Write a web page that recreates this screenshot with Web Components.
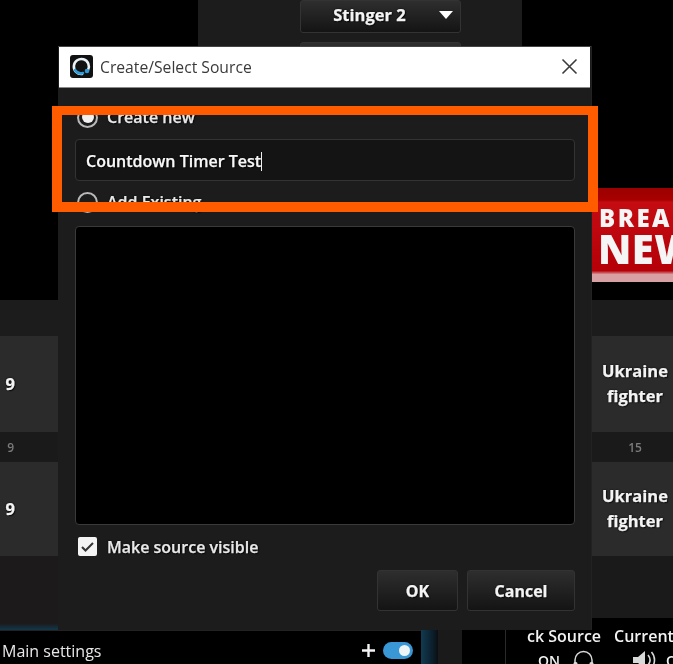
<!DOCTYPE html>
<html>
<head>
<meta charset="utf-8">
<title>Create/Select Source</title>
<style>
  html, body { margin: 0; padding: 0; background: #000; }
  body { width: 673px; height: 664px; overflow: hidden; font-family: "Open Sans", "Liberation Sans", sans-serif; color: #f2f2f2; }
</style>
</head>
<body>

<studio-desktop>
  <source-dialog heading="Create/Select Source"></source-dialog>
</studio-desktop>

<script>
const textGlow = 'text-shadow: 0 0 2px #000, 1px 1px 1px rgba(0,0,0,.7); -webkit-text-stroke: .25px currentColor;';

class StudioButton extends HTMLElement {
    connectedCallback() {
        this.attachShadow({ mode: 'open' }).innerHTML = `
        <style>
            :host {
                display: flex;
                align-items: center;
                justify-content: center;
                box-sizing: border-box;
                border: 1px solid #333;
                border-radius: 3px;
                background: linear-gradient(#2e2e2e, #141414);
                font-size: 16px;
                font-weight: 700;
                color: #f4f4f4;
                ${textGlow}
            }
        </style>
        <slot></slot>`;
    }
}

class SceneTile extends HTMLElement {
    connectedCallback() {
        this.attachShadow({ mode: 'open' }).innerHTML = `
        <style>
            :host {
                display: flex;
                align-items: center;
                box-sizing: border-box;
                padding-bottom: 2px;
                background: #2c2b2b;
                font-size: 16.5px;
                font-weight: 700;
                line-height: 25px;
                color: #f4f4f4;
                text-align: center;
                ${textGlow}
            }
            :host([align=end]) { justify-content: flex-end; padding-right: 43px; }
            :host([align=center]) { justify-content: center; padding-left: 7px; }
        </style>
        <slot></slot>`;
    }
}

class SceneNumber extends HTMLElement {
    connectedCallback() {
        this.attachShadow({ mode: 'open' }).innerHTML = `
        <style>
            :host {
                display: flex;
                align-items: center;
                box-sizing: border-box;
                background: #1a1a1a;
                font-size: 12px;
                font-weight: 600;
                color: #7b7b7b;
            }
            :host([align=end]) { justify-content: flex-end; padding-right: 44px; }
            :host([align=center]) { justify-content: center; padding-left: 7px; }
        </style>
        <slot></slot>`;
    }
}

class StudioDesktop extends HTMLElement {
    connectedCallback() {
        this.attachShadow({ mode: 'open' }).innerHTML = `
        <style>
            :host {
                display: block;
                position: relative;
                width: 673px;
                height: 664px;
                overflow: hidden;
                background: #000;
                filter: blur(.45px);
            }
            .top { display: grid; grid-template-columns: 198px 324px 1fr; height: 300px; }
            .panel { background: #1c1c1c; height: 46px; padding-left: 102px; display: flex; flex-direction: column; gap: 9px; overflow: hidden; }
            .stinger { width: 161px; height: 33px; flex: none; padding: 0 8px 4px 0; font-size: 16.5px; }
            .second { width: 161px; height: 33px; flex: none; }
            .caret { width: 0; height: 0; border: 7px solid transparent; border-top: 8px solid #fff; border-bottom: 0; margin-left: 33px; margin-right: -33px; }
            .news-slot { display: flex; justify-content: flex-end; padding-top: 188px; }
            .news { width: 82px; height: 94px; box-sizing: border-box; overflow: hidden; white-space: nowrap; background: linear-gradient(#9c0000 0, #a80000 12px, #c40c12 14px, #b50008 88%, #d9a0a4 92%, #d9a0a4 100%); color: #f5f5f5; font-weight: 800; padding: 16px 0 0 8px; }
            .news b { display: block; font-weight: 800; }
            .news .a { font-size: 24px; line-height: 27px; letter-spacing: 2.5px; }
            .news .b { font-size: 40px; line-height: 35px; letter-spacing: .5px; margin-left: -1px; }
            .lower { display: grid; grid-template-columns: 505px 168px; height: 364px; }
            .col { display: flex; flex-direction: column; }
            .board { display: grid; grid-template-rows: 36px 96px 30px 94px; }
            .board.left { width: 58px; height: 330px; background: linear-gradient(#1c1a1a 0, #1c1a1a 98%, #12394d 100%); }
            .board.right { height: 318px; padding-left: 85px; background: #1b1a1a; }
            .board .head { background: #1d1c1c; }
            .bar { display: flex; flex: 1; }
            .settings { width: 421px; box-sizing: border-box; display: flex; align-items: center; padding: 0 8px 2px 2px; border-top: 1px solid #222; font-size: 16px; color: #e8e8e8; }
            .settings span { flex: 1; }
            .plus { display: block; margin-right: 7px; }
            .toggle { width: 30px; height: 17px; border-radius: 9px; background: #3a97d6; position: relative; }
            .toggle::after { content: ""; position: absolute; right: 3px; top: 3px; width: 11px; height: 11px; border-radius: 50%; background: #eef3f6; }
            .edge { width: 17px; background: linear-gradient(90deg, #123a50, #0c2230 60%, #0a0f13); }
            .gutter { width: 24px; background: #1a1a1a; }
            .audio { flex: 1; padding: 6px 0 0 21px; border-left: 1px solid #2a2a2a; font-size: 16px; font-weight: 600; white-space: nowrap; overflow: hidden; }
            .audio-head { display: flex; gap: 13px; height: 24px; align-items: center; }
            .audio-row { display: flex; align-items: center; margin-left: 11px; height: 24px; font-size: 14px; }
            .audio-row svg { display: block; flex: none; }
        </style>
        <div class="top">
            <div></div>
            <div class="panel">
                <studio-button class="stinger">Stinger 2<span class="caret"></span></studio-button>
                <studio-button class="second"></studio-button>
            </div>
            <div class="news-slot">
                <div class="news"><b class="a">BREAKING</b><b class="b">NEWS</b></div>
            </div>
        </div>
        <div class="lower">
            <div class="col">
                <div class="board left">
                    <div class="head"></div>
                    <scene-tile align="end">9</scene-tile>
                    <scene-number align="end">9</scene-number>
                    <scene-tile align="end">9</scene-tile>
                </div>
                <div class="bar">
                    <div class="settings">
                        <span>Main settings</span>
                        <svg class="plus" width="15" height="15" viewBox="0 0 15 15"><path d="M7.500 1v13M1 7.500h13" stroke="#f4f4f4" stroke-width="2.400"/></svg>
                        <div class="toggle"></div>
                    </div>
                    <div class="edge"></div>
                    <div class="gutter"></div>
                    <div style="flex:1"></div>
                </div>
            </div>
            <div class="col">
                <div class="board right">
                    <div class="head"></div>
                    <scene-tile align="center">Ukraine<br>fighter</scene-tile>
                    <scene-number align="center">15</scene-number>
                    <scene-tile align="center">Ukraine<br>fighter</scene-tile>
                </div>
                <div class="audio">
                    <div class="audio-head"><span>ck Source</span><span>Current</span></div>
                    <div class="audio-row">
                        <span>ON</span>
                        <svg style="margin-left:12px" width="23" height="22" viewBox="0 0 23 22"><path d="M3 15v-4a8.500 8.500 0 0 1 17 0v4" fill="none" stroke="#d8d8d8" stroke-width="1.500"/><rect x="1.500" y="13" width="4" height="7" rx="1.500" fill="#d8d8d8"/><rect x="17.500" y="13" width="4" height="7" rx="1.500" fill="#d8d8d8"/></svg>
                        <svg style="margin-left:37px" width="24" height="22" viewBox="0 0 24 22"><path d="M1 8h5l7-6v18l-7-6H1z" fill="#d8d8d8"/><path d="M16 6c2.500 3 2.500 7 0 10M19.500 3c4 4.500 4 11.500 0 16" fill="none" stroke="#d8d8d8" stroke-width="1.600"/></svg>
                        <span style="margin-left:10px">ON</span>
                    </div>
                </div>
            </div>
        </div>
        <slot></slot>`;
    }
}

class SourceDialog extends HTMLElement {
    connectedCallback() {
        this.attachShadow({ mode: 'open' }).innerHTML = `
        <style>
            :host {
                position: absolute;
                left: 58px;
                top: 46px;
                width: 533px;
                height: 584px;
                box-sizing: border-box;
                display: flex;
                flex-direction: column;
                background: #1c1c1c;
                border-top: 1px solid #444;
                box-shadow: 1px 0 0 #222;
                font-size: 16px;
                font-weight: 600;
                color: #e9e9e9;
            }
            .title { height: 41px; flex: none; box-sizing: border-box; background: #fff; border-bottom: 1px solid #8a8a8a; margin: 0 1px; display: flex; align-items: center; padding: 0 12px 1px 11px; color: #3a3a3a; font-weight: 400; font-size: 15.7px; }
            .title span { flex: 1; margin-left: 7px; }
            .logo { display: block; }
            .close { display: block; }
            .body { flex: 1; display: flex; flex-direction: column; padding: 18px 16px 0 17px; }
            .option { display: flex; align-items: center; gap: 9px; height: 22px; ${textGlow} }
            .radio { width: 21px; height: 21px; box-sizing: border-box; border-radius: 50%; border: 2px solid #b9b9b9; display: flex; align-items: center; justify-content: center; margin-left: 2px; }
            .radio.on::after { content: ""; width: 12px; height: 12px; border-radius: 50%; background: #f2f2f2; }
            .field { height: 42px; box-sizing: border-box; margin: 11px 0 10px; padding: 2px 10px 0; border: 1px solid #333; border-radius: 4px; background: #141414; display: flex; align-items: center; color: #f8f8f8; ${textGlow} }
            .cursor { display: inline-block; width: 1px; height: 19px; background: #f0f0f0; }
            .list { height: 299px; flex: none; box-sizing: border-box; margin-top: 13px; background: #000; border: 1px solid #3a3a3a; border-radius: 4px; }
            .visible { display: flex; align-items: center; gap: 10px; height: 20px; margin: 11px 0 14px 3px; ${textGlow} }
            .visible span { padding-top: 2px; }
            .check { width: 19px; height: 19px; display: block; }
            .actions { display: flex; justify-content: flex-end; gap: 9px; }
            .actions studio-button { height: 41px; }
            .ok { width: 81px; }
            .cancel { width: 108px; }
            .marker { position: absolute; left: -6px; top: 59px; width: 546px; height: 106px; box-sizing: border-box; border: solid #ff5c00; border-width: 9px 10px 10px; }
        </style>
        <div class="title">
            <svg class="logo" width="23" height="23" viewBox="0 0 23 23">
                <rect width="23" height="23" rx="3" fill="#111"/>
                <path d="M12 19a7.500 7.500 0 1 1 6-4" fill="none" stroke="#e8f2f8" stroke-width="2.600" stroke-linecap="round"/>
                <path d="M5 15c2 3 5 4 8 3" fill="none" stroke="#2d9bd8" stroke-width="2.600" stroke-linecap="round"/>
                <circle cx="17" cy="16" r="2.300" fill="#2d9bd8"/>
            </svg>
            <span>${this.getAttribute('heading')}</span>
            <svg class="close" width="17" height="17" viewBox="0 0 17 17"><path d="M1.500 1.500l14 14M15.500 1.500l-14 14" stroke="#3c3c3c" stroke-width="1.600"/></svg>
        </div>
        <div class="body">
            <div class="option"><div class="radio on"></div>Create new</div>
            <div class="field">Countdown Timer Test<span class="cursor"></span></div>
            <div class="option"><div class="radio"></div>Add Existing</div>
            <div class="list"></div>
            <div class="visible">
                <svg class="check" viewBox="0 0 19 19"><rect width="19" height="19" rx="2" fill="#f4f4f4"/><path d="M4 10l3.500 3.500L15 6" fill="none" stroke="#333" stroke-width="2"/></svg>
                <span>Make source visible</span>
            </div>
            <div class="actions">
                <studio-button class="ok">OK</studio-button>
                <studio-button class="cancel">Cancel</studio-button>
            </div>
        </div>
        <div class="marker"></div>`;
    }
}

customElements.define('studio-button', StudioButton);
customElements.define('scene-tile', SceneTile);
customElements.define('scene-number', SceneNumber);
customElements.define('studio-desktop', StudioDesktop);
customElements.define('source-dialog', SourceDialog);
</script>
</body>
</html>
